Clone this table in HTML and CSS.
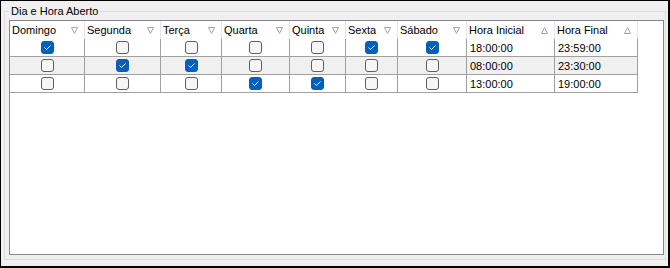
FILE: index.html
```html
<!DOCTYPE html>
<html lang="pt">
<head>
<meta charset="UTF-8">
<title>Dia e Hora Aberto</title>
<link rel="stylesheet" href="styles.css">
</head>
<body>
<div class="frame">
  <fieldset class="group">
    <legend>Dia e Hora Aberto</legend>
    <div class="grid">
      <!-- header -->
      <div class="th"><span>Domingo</span><svg class="sort" viewBox="0 0 7 7"><polygon points="0.5,0.5 6.5,0.5 3.5,6.5"/></svg></div>
      <div class="th"><span>Segunda</span><svg class="sort" viewBox="0 0 7 7"><polygon points="0.5,0.5 6.5,0.5 3.5,6.5"/></svg></div>
      <div class="th"><span>Terça</span><svg class="sort" viewBox="0 0 7 7"><polygon points="0.5,0.5 6.5,0.5 3.5,6.5"/></svg></div>
      <div class="th"><span>Quarta</span><svg class="sort" viewBox="0 0 7 7"><polygon points="0.5,0.5 6.5,0.5 3.5,6.5"/></svg></div>
      <div class="th"><span>Quinta</span><svg class="sort" viewBox="0 0 7 7"><polygon points="0.5,0.5 6.5,0.5 3.5,6.5"/></svg></div>
      <div class="th"><span>Sexta</span><svg class="sort" viewBox="0 0 7 7"><polygon points="0.5,0.5 6.5,0.5 3.5,6.5"/></svg></div>
      <div class="th"><span>Sábado</span><svg class="sort" viewBox="0 0 7 7"><polygon points="0.5,0.5 6.5,0.5 3.5,6.5"/></svg></div>
      <div class="th"><span>Hora Inicial</span><svg class="sort" viewBox="0 0 7 7"><polygon points="3.5,0.5 6.5,6.5 0.5,6.5"/></svg></div>
      <div class="th"><span>Hora Final</span><svg class="sort" viewBox="0 0 7 7"><polygon points="3.5,0.5 6.5,6.5 0.5,6.5"/></svg></div>

      <!-- row 1 -->
      <div class="td"><span class="chk on"><svg viewBox="0 0 13 13"><polyline points="3.5,6.5 5.5,8.5 9.5,4.5"/></svg></span></div>
      <div class="td"><span class="chk"></span></div>
      <div class="td"><span class="chk"></span></div>
      <div class="td"><span class="chk"></span></div>
      <div class="td"><span class="chk"></span></div>
      <div class="td"><span class="chk on"><svg viewBox="0 0 13 13"><polyline points="3.5,6.5 5.5,8.5 9.5,4.5"/></svg></span></div>
      <div class="td"><span class="chk on"><svg viewBox="0 0 13 13"><polyline points="3.5,6.5 5.5,8.5 9.5,4.5"/></svg></span></div>
      <div class="td time">18:00:00</div>
      <div class="td time">23:59:00</div>

      <!-- row 2 -->
      <div class="td alt"><span class="chk"></span></div>
      <div class="td alt"><span class="chk on"><svg viewBox="0 0 13 13"><polyline points="3.5,6.5 5.5,8.5 9.5,4.5"/></svg></span></div>
      <div class="td alt"><span class="chk on"><svg viewBox="0 0 13 13"><polyline points="3.5,6.5 5.5,8.5 9.5,4.5"/></svg></span></div>
      <div class="td alt"><span class="chk"></span></div>
      <div class="td alt"><span class="chk"></span></div>
      <div class="td alt"><span class="chk"></span></div>
      <div class="td alt"><span class="chk"></span></div>
      <div class="td alt time">08:00:00</div>
      <div class="td alt time">23:30:00</div>

      <!-- row 3 -->
      <div class="td"><span class="chk"></span></div>
      <div class="td"><span class="chk"></span></div>
      <div class="td"><span class="chk"></span></div>
      <div class="td"><span class="chk on"><svg viewBox="0 0 13 13"><polyline points="3.5,6.5 5.5,8.5 9.5,4.5"/></svg></span></div>
      <div class="td"><span class="chk on"><svg viewBox="0 0 13 13"><polyline points="3.5,6.5 5.5,8.5 9.5,4.5"/></svg></span></div>
      <div class="td"><span class="chk"></span></div>
      <div class="td"><span class="chk"></span></div>
      <div class="td time">13:00:00</div>
      <div class="td time">19:00:00</div>
    </div>
  </fieldset>
</div>
</body>
</html>
```

FILE: styles.css
```css
body {
  margin: 0;
  font-family: "Liberation Sans", Arial, sans-serif;
  font-size: 11px;
  color: #000;
}

.frame {
  width: 670px;
  height: 268px;
  box-sizing: border-box;
  border: 1px solid #000;
  border-right-width: 2px;
  border-bottom-width: 2px;
  background-color: #f0f0f0;
  padding: 4px 2px 6px 3px;
  display: flex;
}

.group {
  flex: 1;
  min-width: 0;
  margin: 0;
  border: 1px solid #dcdcdc;
  padding: 0 1px 4px 4px;
  display: flex;
  flex-direction: column;
}

.group legend {
  padding: 0 2px;
  line-height: 13px;
}

.grid {
  flex: 1;
  margin-top: 2px;
  border: 1px solid #828790;
  background-color: #fff;
  display: grid;
  grid-template-columns: 75px 76px 61px 68px 56px 52px 69px 88px 83px;
  grid-auto-rows: 18px;
  align-content: start;
}

.th {
  box-sizing: border-box;
  border-right: 1px solid #e5e5e5;
  padding: 0 6px 0 2px;
  display: flex;
  align-items: center;
  justify-content: space-between;
  white-space: nowrap;
}

.th .sort {
  width: 7px;
  height: 7px;
  flex: none;
}

.th .sort polygon {
  fill: none;
  stroke: #a5a5a5;
  stroke-width: 1;
}

.td {
  box-sizing: border-box;
  border-right: 1px solid #a0a0a0;
  border-bottom: 1px solid #a0a0a0;
  display: flex;
  align-items: center;
  justify-content: center;
}

.td.alt {
  background-color: #f0f0f0;
}

.td.time {
  justify-content: flex-start;
  padding-left: 3px;
}

/* checkboxes */
.chk {
  width: 13px;
  height: 13px;
  box-sizing: border-box;
  border: 1px solid #5f5f5f;
  border-radius: 3px;
  background-color: #f6f6f6;
}

.chk.on {
  border-color: #005fb8;
  background-color: #005fb8;
}

.chk svg {
  display: block;
  width: 13px;
  height: 13px;
  margin: -1px;
}

.chk polyline {
  fill: none;
  stroke: #fff;
  stroke-width: 1;
}
```
